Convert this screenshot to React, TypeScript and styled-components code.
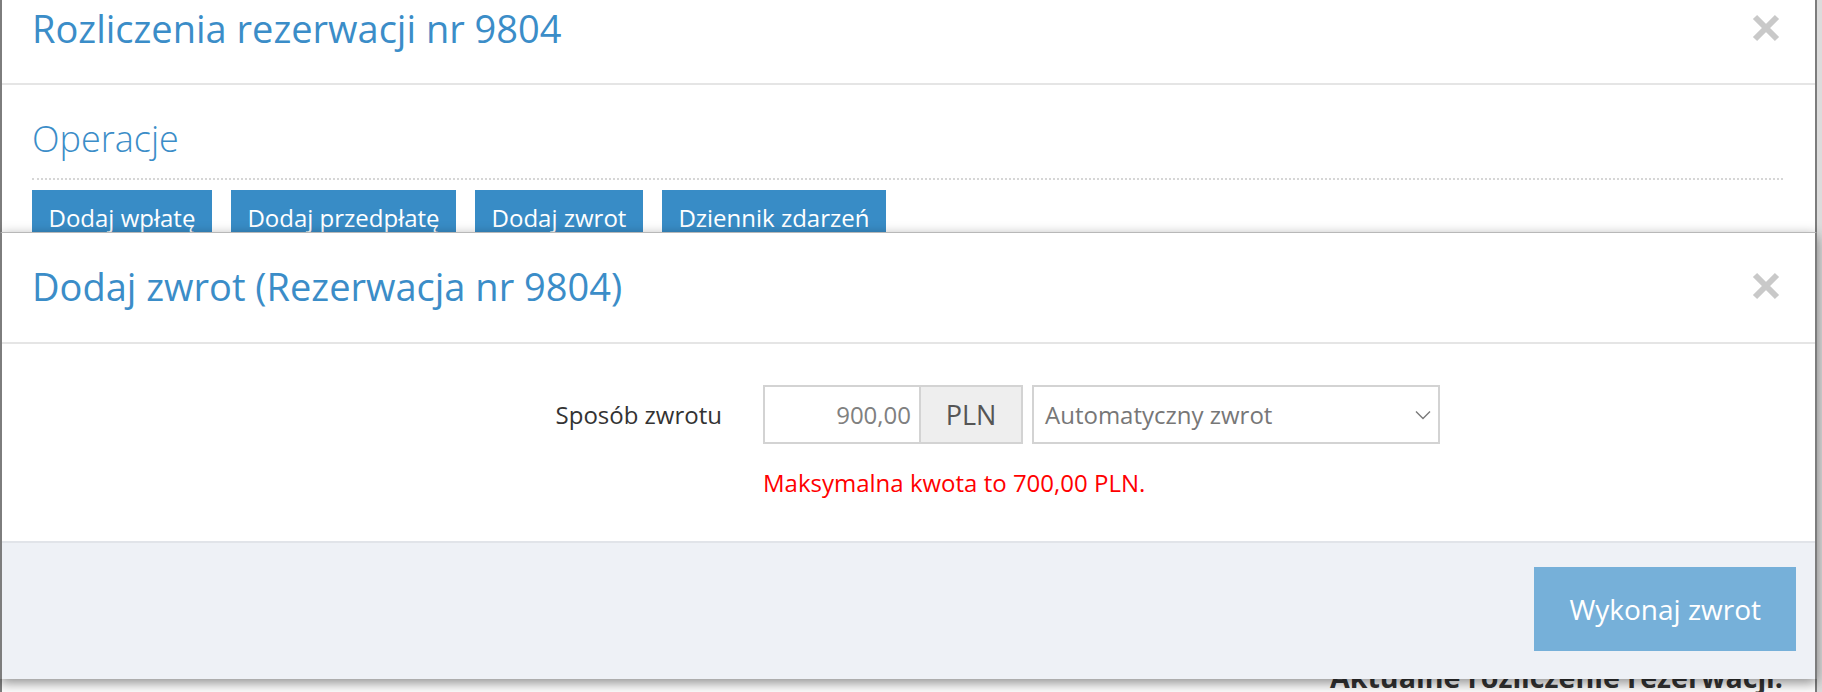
import styled, { createGlobalStyle } from "styled-components";

const COLORS = {
  blue: "#3b8dc8",
  button: "#388cc6",
  buttonDisabled: "#76b0d9",
  text: "#333333",
  muted: "#808080",
  border: "#d3d3d3",
  headerLine: "#e5e5e5",
  footer: "#eef1f6",
  error: "#ff0000",
  edge: "#7d7d7d",
};

const GlobalStyle = createGlobalStyle`
  html, body {
    margin: 0;
    padding: 0;
    width: 1822px;
    height: 692px;
    overflow: hidden;
    font-family: "Open Sans", "Noto Sans", sans-serif;
    color: ${COLORS.text};
  }
  * {
    box-sizing: border-box;
  }
`;

const Page = styled.div`
  position: relative;
  width: 1822px;
  height: 692px;
  overflow: hidden;
  background: #dcdcdc;
`;

const BackModal = styled.section`
  width: 1817px;
  height: 692px;
  background: #ffffff;
  border-left: 2px solid ${COLORS.edge};
  border-right: 2px solid ${COLORS.edge};
`;

const FrontModal = styled.section`
  position: absolute;
  top: 232px;
  left: 0;
  width: 1817px;
  background: #ffffff;
  border-top: 1px solid rgba(0, 0, 0, 0.28);
  border-left: 2px solid ${COLORS.edge};
  border-right: 2px solid ${COLORS.edge};
  box-shadow: 0 4px 12px rgba(0, 0, 0, 0.45);
`;

const ModalHeader = styled.header<{ $top: number; $bottom: number }>`
  display: flex;
  align-items: center;
  justify-content: space-between;
  padding: ${(p) => p.$top}px 35px ${(p) => p.$bottom}px 30px;
  border-bottom: 2px solid ${COLORS.headerLine};
`;

const ModalTitle = styled.h2`
  margin: 0;
  font-size: 38px;
  font-weight: 400;
  line-height: 52px;
  color: ${COLORS.blue};
`;

const CloseButton = styled.button`
  display: flex;
  padding: 0;
  border: none;
  background: transparent;
  cursor: pointer;
`;

const BackBody = styled.div`
  padding: 0 32px 0 30px;
`;

const SectionTitle = styled.h3`
  margin: 30px 0 0;
  padding-bottom: 15px;
  font-size: 36px;
  font-weight: 300;
  line-height: 48px;
  color: ${COLORS.blue};
  border-bottom: 2px dotted #d6d6d6;
`;

const ActionBar = styled.div`
  display: flex;
  gap: 19px;
  margin-top: 10px;
`;

const ActionButton = styled.button`
  padding: 11px 16.5px;
  border: none;
  border-radius: 0;
  background: ${COLORS.button};
  color: #ffffff;
  font-family: inherit;
  font-size: 24px;
  line-height: 34px;
  cursor: pointer;
`;

const SummaryHeading = styled.h4`
  margin: 411px 0 0;
  text-align: right;
  font-size: 28.6px;
  font-weight: 700;
  line-height: 40px;
  color: ${COLORS.text};
`;

const FormBody = styled.div`
  padding: 41px 30px 41px;
`;

const FormRow = styled.div`
  display: flex;
  align-items: center;
  gap: 41px;
`;

const FieldLabel = styled.label`
  width: 690px;
  text-align: right;
  font-size: 24px;
  line-height: 34px;
  color: ${COLORS.text};
`;

const Controls = styled.div`
  display: flex;
  gap: 9px;
`;

const InputGroup = styled.div`
  display: flex;
  height: 59px;
`;

const AmountInput = styled.input`
  width: 156px;
  height: 100%;
  padding: 0 8px;
  border: 2px solid ${COLORS.border};
  border-right: none;
  border-radius: 0;
  font-family: inherit;
  font-size: 24px;
  text-align: right;
  color: ${COLORS.muted};
  outline: none;
`;

const Addon = styled.span`
  display: flex;
  align-items: center;
  justify-content: center;
  width: 104px;
  border: 2px solid ${COLORS.border};
  background: #eeeeee;
  font-size: 27px;
  color: #555555;
`;

const SelectBox = styled.div`
  display: flex;
  align-items: center;
  justify-content: space-between;
  width: 408px;
  height: 59px;
  padding: 0 7px 0 11px;
  border: 2px solid ${COLORS.border};
  font-size: 24px;
  color: #777777;
`;

const ErrorText = styled.p`
  margin: 22px 0 0 731px;
  font-size: 24px;
  line-height: 34px;
  color: ${COLORS.error};
`;

const ModalFooter = styled.footer`
  display: flex;
  justify-content: flex-end;
  padding: 24px 19px 28px;
  background: ${COLORS.footer};
  border-top: 2px solid #e1e4e9;
`;

const SubmitButton = styled.button`
  padding: 23px 35px;
  border: none;
  border-radius: 0;
  background: ${COLORS.buttonDisabled};
  color: #ffffff;
  font-family: inherit;
  font-size: 28px;
  line-height: 38px;
  cursor: not-allowed;
`;

const CloseIcon = () => (
  <svg width="28" height="28" viewBox="0 0 28 28" aria-hidden="true">
    <path
      d="M3 3 L25 25 M25 3 L3 25"
      stroke="#c9c9c9"
      strokeWidth="6"
      fill="none"
    />
  </svg>
);

const ChevronDown = () => (
  <svg width="16" height="10" viewBox="0 0 16 10" aria-hidden="true">
    <path
      d="M1 1.5 L8 8.5 L15 1.5"
      stroke="#7a7a7a"
      strokeWidth="1.4"
      fill="none"
    />
  </svg>
);

const operations = [
  "Dodaj wpłatę",
  "Dodaj przedpłatę",
  "Dodaj zwrot",
  "Dziennik zdarzeń",
];

export default function App() {
  return (
    <>
      <GlobalStyle />
      <Page>
        <BackModal>
          <ModalHeader $top={2} $bottom={29}>
            <ModalTitle>Rozliczenia rezerwacji nr 9804</ModalTitle>
            <CloseButton aria-label="Zamknij">
              <CloseIcon />
            </CloseButton>
          </ModalHeader>
          <BackBody>
            <SectionTitle>Operacje</SectionTitle>
            <ActionBar>
              {operations.map((op) => (
                <ActionButton key={op}>{op}</ActionButton>
              ))}
            </ActionBar>
            <SummaryHeading>Aktualne rozliczenie rezerwacji:</SummaryHeading>
          </BackBody>
        </BackModal>

        <FrontModal>
          <ModalHeader $top={27} $bottom={30}>
            <ModalTitle>Dodaj zwrot (Rezerwacja nr 9804)</ModalTitle>
            <CloseButton aria-label="Zamknij">
              <CloseIcon />
            </CloseButton>
          </ModalHeader>
          <FormBody>
            <FormRow>
              <FieldLabel htmlFor="refund-amount">Sposób zwrotu</FieldLabel>
              <Controls>
                <InputGroup>
                  <AmountInput id="refund-amount" defaultValue="900,00" />
                  <Addon>PLN</Addon>
                </InputGroup>
                <SelectBox>
                  <span>Automatyczny zwrot</span>
                  <ChevronDown />
                </SelectBox>
              </Controls>
            </FormRow>
            <ErrorText>Maksymalna kwota to 700,00 PLN.</ErrorText>
          </FormBody>
          <ModalFooter>
            <SubmitButton disabled>Wykonaj zwrot</SubmitButton>
          </ModalFooter>
        </FrontModal>
      </Page>
    </>
  );
}
